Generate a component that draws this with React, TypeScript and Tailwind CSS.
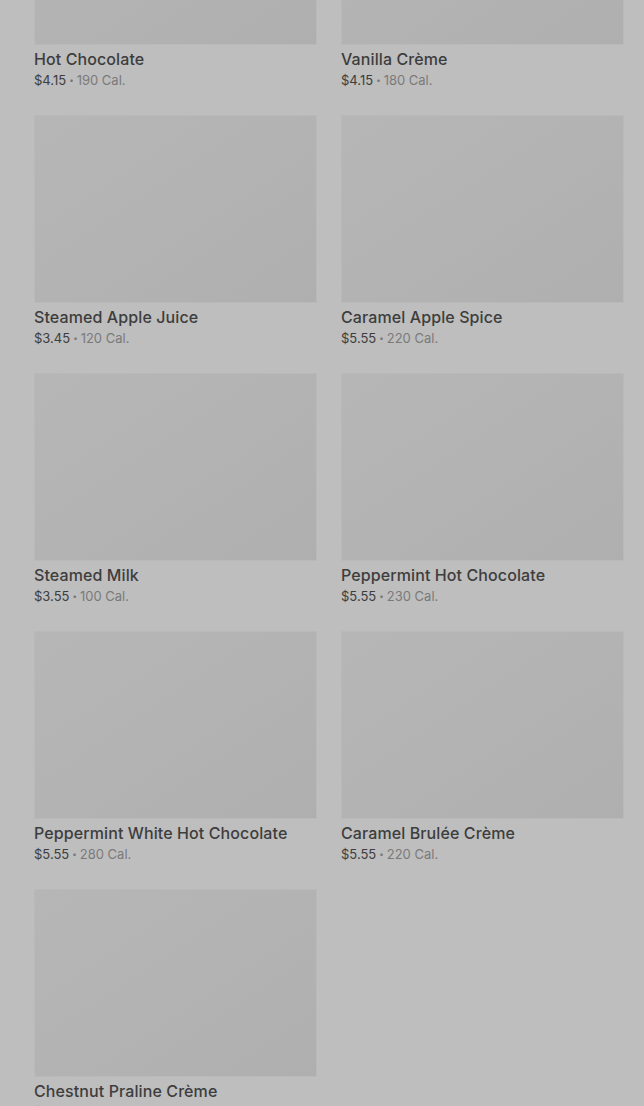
import React from "react";

const items = [
  { name: "Hot Chocolate", price: "$4.15", cal: "190 Cal." },
  { name: "Vanilla Crème", price: "$4.15", cal: "180 Cal." },
  { name: "Steamed Apple Juice", price: "$3.45", cal: "120 Cal." },
  { name: "Caramel Apple Spice", price: "$5.55", cal: "220 Cal." },
  { name: "Steamed Milk", price: "$3.55", cal: "100 Cal." },
  { name: "Peppermint Hot Chocolate", price: "$5.55", cal: "230 Cal." },
  { name: "Peppermint White Hot Chocolate", price: "$5.55", cal: "280 Cal." },
  { name: "Caramel Brulée Crème", price: "$5.55", cal: "220 Cal." },
  { name: "Chestnut Praline Crème", price: "$5.55", cal: "190 Cal." },
];

export default function App() {
  return (
    <div
      className="w-[644px] h-[1106px] overflow-hidden bg-[#bebebe]"
      style={{ fontFamily: "Inter, 'Noto Sans', sans-serif" }}
    >
      <div className="mt-[-143px] grid grid-cols-2 gap-x-6 gap-y-[26px] pl-[34px] pr-[20px]">
        {items.map((it) => (
          <div key={it.name} className="flex flex-col">
            <div className="h-[188px] border border-[#b9b9b9] bg-gradient-to-br from-[#b6b6b6] via-[#b3b3b3] to-[#afafaf]" />
            <div className="mt-1 text-[16px] leading-[20px] font-medium text-[#3d3d3d] tracking-[0.1px]">
              {it.name}
            </div>
            <div className="mt-[2px] flex items-center text-[13px] leading-[18px] text-[#3d3d3d]">
              <span>{it.price}</span>
              <span className="mx-[3px] text-[8px] text-[#777777]">•</span>
              <span className="text-[#7a7a7a]">{it.cal}</span>
            </div>
          </div>
        ))}
      </div>
    </div>
  );
}
